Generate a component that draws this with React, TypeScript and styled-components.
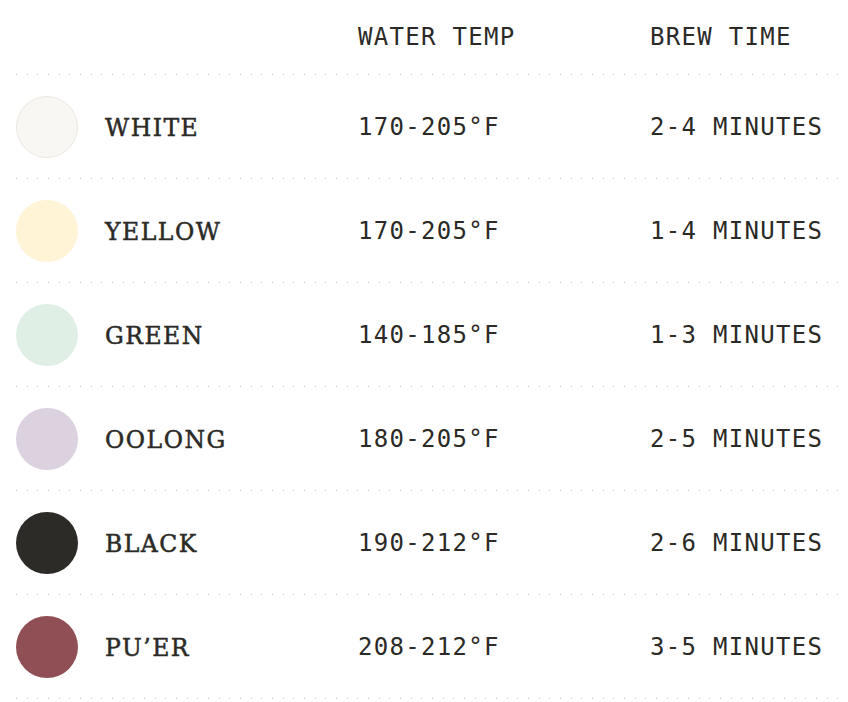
import React from 'react'
import styled, { createGlobalStyle } from 'styled-components'

const GlobalStyle = createGlobalStyle`
  html, body {
    margin: 0;
    padding: 0;
    background: #ffffff;
  }
`

const teas = [
  { name: 'WHITE', temp: '170-205°F', time: '2-4 MINUTES', color: '#f9f7f3', ring: '#ece8e1' },
  { name: 'YELLOW', temp: '170-205°F', time: '1-4 MINUTES', color: '#fff4d6' },
  { name: 'GREEN', temp: '140-185°F', time: '1-3 MINUTES', color: '#e0efe5' },
  { name: 'OOLONG', temp: '180-205°F', time: '2-5 MINUTES', color: '#dcd1de' },
  { name: 'BLACK', temp: '190-212°F', time: '2-6 MINUTES', color: '#2d2b27' },
  { name: 'PU’ER', temp: '208-212°F', time: '3-5 MINUTES', color: '#8f4f55' },
]

const Table = styled.div`
  width: 848px;
  padding: 0 6px 0 16px;
  box-sizing: border-box;
  color: #2b2a27;
`

// dotted rule: three crisp 1px dots per 32px tile (~10.7px apart)
const Row = styled.div<{ $header?: boolean }>`
  display: grid;
  grid-template-columns: 89px 253px 292px 1fr;
  align-items: center;
  height: ${p => (p.$header ? '75px' : '104px')};
  padding-bottom: ${p => (p.$header ? '1px' : '1px')};
  box-sizing: border-box;
  background-image:
    linear-gradient(to right, #bdbdbd 1px, transparent 1px),
    linear-gradient(to right, transparent 11px, #bdbdbd 11px, #bdbdbd 12px, transparent 12px),
    linear-gradient(to right, transparent 21px, #bdbdbd 21px, #bdbdbd 22px, transparent 22px);
  background-size: 32px 1px;
  background-repeat: repeat-x;
  background-position: left bottom;
`

const Swatch = styled.div<{ $color: string; $ring?: string }>`
  width: 62px;
  height: 62px;
  border-radius: 50%;
  background: ${p => p.$color};
  box-sizing: border-box;
  border: ${p => (p.$ring ? `1px solid ${p.$ring}` : 'none')};
`

const Name = styled.div`
  font-family: 'DejaVu Serif', 'Liberation Serif', serif;
  font-size: 23.5px;
  font-weight: 400;
  letter-spacing: 1.5px;
  padding-top: 2px;
  -webkit-text-stroke: 0.5px #2b2a27;
`

const Mono = styled.div`
  font-family: 'DejaVu Sans Mono', 'Liberation Mono', monospace;
  font-size: 24px;
  letter-spacing: 1.3px;
  white-space: nowrap;
`

export default function App() {
  return (
    <>
      <GlobalStyle />
      <Table>
        <Row $header>
          <span />
          <span />
          <Mono>WATER TEMP</Mono>
          <Mono>BREW TIME</Mono>
        </Row>
        {teas.map(t => (
          <Row key={t.name}>
            <Swatch $color={t.color} $ring={t.ring} />
            <Name>{t.name}</Name>
            <Mono>{t.temp}</Mono>
            <Mono>{t.time}</Mono>
          </Row>
        ))}
      </Table>
    </>
  )
}
